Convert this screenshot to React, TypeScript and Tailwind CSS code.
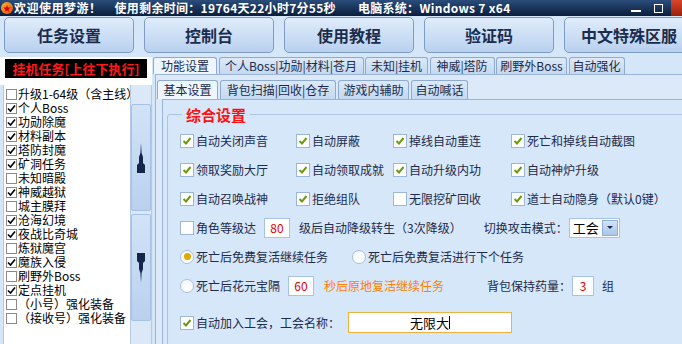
const tasks: [string, boolean][] = [
  ["升级1-64级（含主线）", false],
  ["个人Boss", true],
  ["功勋除魔", true],
  ["材料副本", true],
  ["塔防封魔", true],
  ["矿洞任务", true],
  ["未知暗殿", false],
  ["神威越狱", true],
  ["城主膜拜", false],
  ["沧海幻境", true],
  ["夜战比奇城", true],
  ["炼狱魔宫", false],
  ["魔族入侵", true],
  ["刷野外Boss", false],
  ["定点挂机", true],
  ["（小号）强化装备", false],
  ["（接收号）强化装备", false],
];

const topTabs = [
  { label: "功能设置", w: "w-[64px]", active: true },
  { label: "个人Boss|功勋|材料|苍月", w: "w-[145px]" },
  { label: "未知|挂机", w: "w-[63px]" },
  { label: "神威|塔防", w: "w-[65px]" },
  { label: "刷野外Boss", w: "w-[71px]" },
  { label: "自动强化", w: "w-[56px]" },
];

const subTabs = [
  { label: "基本设置", w: "w-[61px]", active: true },
  { label: "背包扫描|回收|仓存", w: "w-[116px]" },
  { label: "游戏内辅助", w: "w-[71px]" },
  { label: "自动喊话", w: "w-[57px]" },
];

const checkRows: [string, boolean][][] = [
  [["自动关闭声音", true], ["自动屏蔽", true], ["掉线自动重连", true], ["死亡和掉线自动截图", true]],
  [["领取奖励大厅", true], ["自动领取成就", true], ["自动升级内功", true], ["自动神炉升级", true]],
  [["自动召唤战神", true], ["拒绝组队", true], ["无限挖矿回收", false], ["道士自动隐身（默认0键）", true]],
];

const colW = ["w-[116px]", "w-[97px]", "w-[118px]", "w-[160px]"];

const Check = ({ on }: { on: boolean }) => (
  <span className="w-[14px] h-[14px] shrink-0 bg-white border border-[#9cb6d8] flex items-center justify-center">
    {on && (
      <svg width="10" height="10" viewBox="0 0 10 10">
        <path d="M1.5 5 L4 7.5 L8.5 2" fill="none" stroke="#6b9a10" strokeWidth="2" />
      </svg>
    )}
  </span>
);

const Radio = ({ on }: { on: boolean }) => (
  <span className="w-[14px] h-[14px] shrink-0 rounded-full bg-gradient-to-b from-[#f4f8fd] to-white border border-[#a9bfdc] flex items-center justify-center">
    {on && <span className="w-[7px] h-[7px] rounded-full bg-[#e4a800]" />}
  </span>
);

const NumBox = ({ v, w = "w-[26px]" }: { v: string; w?: string }) => (
  <span className={`${w} h-[20px] bg-white border border-[#a6c2e6] text-[#e00000] text-[12px] flex items-center justify-center`}>
    {v}
  </span>
);

const Spire = ({ down }: { down?: boolean }) => (
  <svg width="10" height="30" viewBox="0 0 10 30" className={down ? "rotate-180" : ""}>
    <path d="M5 0 L5.6 10 L7 14 L7 20 L9 22 L9 30 L1 30 L1 22 L3 20 L3 14 L4.4 10 Z" fill="#14264a" />
  </svg>
);

export default function App() {
  return (
    <div className="w-[682px] h-[344px] overflow-hidden bg-[#d6e6f9] font-['Noto_Sans_CJK_SC','Noto_Sans',sans-serif] text-[#1c2b4a]">
      {/* TITLE BAR */}
      <div className="h-[16px] flex items-center bg-gradient-to-b from-[#2b4d7c] to-[#0b1e3c] text-white text-[12px] font-bold leading-none">
        <span className="w-[12px] h-[12px] ml-[1px] rounded-full bg-gradient-to-br from-[#ffb43a] to-[#d84a00] flex items-center justify-center text-[#d00] text-[8px]">
          ★
        </span>
        <span className="ml-[1px] tracking-[0.5px]">欢迎使用梦游！</span>
        <span className="ml-[13px] tracking-[0.3px]">使用剩余时间：19764天22小时7分55秒</span>
        <span className="ml-[22px] tracking-[0.3px]">电脑系统：Windows 7 x64</span>
        <span className="ml-auto w-[10px] h-[2px] bg-white mt-[6px]" />
        <span className="ml-[13px] w-[9px] h-[9px] border-[1.5px] border-white" />
        <span className="ml-[8px] w-[11px] h-[16px] bg-gradient-to-b from-[#d9462a] to-[#9c1e0a]" />
      </div>

      {/* MAIN BUTTONS */}
      <div className="h-[41px] pt-[1px] pl-[4px] flex gap-[10px]">
        {["任务设置", "控制台", "使用教程", "验证码", "中文特殊区服"].map((b) => (
          <div
            key={b}
            className="w-[130px] h-[36px] shrink-0 rounded-[5px] border border-[#7f9cc4] bg-gradient-to-b from-[#dfecfb] via-[#cddff5] to-[#b8d0ee] flex items-center justify-center text-[16px] font-bold text-[#1b2c4c]"
          >
            {b}
          </div>
        ))}
      </div>

      <div className="flex h-[287px]">
        {/* LEFT TASK LIST */}
        <div className="w-[152px] shrink-0 flex flex-col">
          <div className="h-[28px] bg-white pt-[2px] pl-[5px]">
            <div className="w-[142px] h-[19px] bg-black text-[#ff1a1a] text-[13px] font-bold flex items-center justify-center">
              挂机任务[上往下执行]
            </div>
          </div>
          <div className="flex-1 flex">
            <div className="w-[127px] ml-[3px] bg-white border-l border-[#b8c8dc] pt-[2px] overflow-hidden">
              {tasks.map(([t, on]) => (
                <div key={t} className="h-[14px] flex items-center gap-[1px] pl-[2px] text-[12px] leading-none text-black whitespace-nowrap">
                  <span className="w-[11px] h-[11px] shrink-0 border border-[#8a8a8a] bg-white flex items-center justify-center">
                    {on && (
                      <svg width="9" height="9" viewBox="0 0 9 9">
                        <path d="M1 4.5 L3.5 7 L8 1.5" fill="none" stroke="#000" strokeWidth="1.6" />
                      </svg>
                    )}
                  </span>
                  {t}
                </div>
              ))}
            </div>
            <div className="w-[22px] bg-[#dbe8f8] border-x border-[#b3c9e6] pt-[19px] flex flex-col items-center gap-[3px]">
              <div className="w-[20px] h-[107px] rounded-[2px] border border-[#a6c1e4] bg-gradient-to-b from-[#d2e3f7] to-[#b9d1ef] flex items-center justify-center">
                <Spire />
              </div>
              <div className="w-[20px] h-[107px] rounded-[2px] border border-[#a6c1e4] bg-gradient-to-b from-[#d2e3f7] to-[#b9d1ef] flex items-center justify-center">
                <Spire down />
              </div>
            </div>
          </div>
        </div>

        {/* RIGHT PANEL */}
        <div className="flex-1 ml-[1px] flex flex-col">
          <div className="h-[21px] flex items-end gap-[1.5px] pb-0">
            {topTabs.map((t) => (
              <div
                key={t.label}
                className={`${t.w} shrink-0 h-[17px] rounded-t-[3px] border border-b-0 border-[#8eaad0] flex items-center justify-center text-[12px] leading-none whitespace-nowrap ${
                  t.active ? "bg-[#eef5fd]" : "bg-gradient-to-b from-[#dce9f8] to-[#c3d8f1]"
                }`}
              >
                {t.label}
              </div>
            ))}
          </div>
          <div className="flex-1 ml-[2px] border-l border-t border-[#98b4d8] bg-[#dbe9f9] flex flex-col pl-[1px]">
            <div className="h-[24px] flex items-end gap-[2px]">
              {subTabs.map((t) => (
                <div
                  key={t.label}
                  className={`${t.w} shrink-0 h-[19px] rounded-t-[3px] border border-b-0 border-[#8eaad0] flex items-center justify-center text-[12px] leading-none whitespace-nowrap ${
                    t.active ? "bg-[#eef5fd]" : "bg-gradient-to-b from-[#dce9f8] to-[#c3d8f1]"
                  }`}
                >
                  {t.label}
                </div>
              ))}
            </div>
            <div className="flex-1 ml-[5px] border-l border-t border-[#98b4d8] bg-[#d7e7fa] pl-[4px] pt-[14px]">
              {/* GROUP BOX */}
              <div className="relative h-[260px] -mr-[10px] border border-[#a9c4e6] rounded-[3px] pl-[12px] pt-[11px] text-[12px] leading-none">
                <span className="absolute -top-[9px] left-[14px] px-[4px] bg-[#d7e7fa] text-[#ff1010] text-[15px] font-bold leading-[18px]">
                  综合设置
                </span>

                {checkRows.map((row, i) => (
                  <div key={i} className="h-[29px] flex items-center">
                    {row.map(([t, on], j) => (
                      <div key={t} className={`${colW[j]} shrink-0 flex items-center gap-[2px] whitespace-nowrap`}>
                        <Check on={on} />
                        {t}
                      </div>
                    ))}
                  </div>
                ))}

                <div className="h-[29px] flex items-center whitespace-nowrap">
                  <Check on={false} />
                  <span className="ml-[2px]">角色等级达</span>
                  <span className="ml-[8px]"><NumBox v="80" /></span>
                  <span className="ml-[9px]">级后自动降级转生（3次降级）</span>
                  <span className="ml-[22px]">切换攻击模式：</span>
                  <span className="ml-[1px] w-[51px] h-[20px] bg-white border border-[#a6c2e6] flex items-center pl-[3px] text-[13px] text-black">
                    工会
                    <span className="ml-auto mr-[1px] w-[16px] h-[16px] bg-gradient-to-b from-[#d3e3f7] to-[#a9c6ea] border border-[#8fb0dc] flex items-center justify-center">
                      <span className="w-0 h-0 border-x-[3px] border-x-transparent border-t-[3px] border-t-[#1c2b4a]" />
                    </span>
                  </span>
                </div>

                <div className="h-[29px] flex items-center whitespace-nowrap">
                  <Radio on />
                  <span className="ml-[2px] w-[156px]">死亡后免费复活继续任务</span>
                  <Radio on={false} />
                  <span className="ml-[2px]">死亡后免费复活进行下个任务</span>
                </div>

                <div className="h-[29px] flex items-center whitespace-nowrap">
                  <Radio on={false} />
                  <span className="ml-[2px]">死亡后花元宝隔</span>
                  <span className="ml-[8px]"><NumBox v="60" /></span>
                  <span className="ml-[10px] text-[#ff8000]">秒后原地复活继续任务</span>
                  <span className="ml-[43px]">背包保持药量：</span>
                  <span className="ml-[1px]"><NumBox v="3" w="w-[22px]" /></span>
                  <span className="ml-[8px]">组</span>
                </div>

                <div className="h-[29px] mt-[8px] flex items-center whitespace-nowrap">
                  <Check on />
                  <span className="ml-[2px]">自动加入工会，工会名称：</span>
                  <span className="ml-[8px] w-[164px] h-[21px] bg-white border border-[#f0b040] flex items-center justify-center text-[13px] text-black">
                    无限大<span className="w-[1px] h-[13px] bg-black" />
                  </span>
                </div>
              </div>
            </div>
          </div>
        </div>
      </div>
    </div>
  );
}
